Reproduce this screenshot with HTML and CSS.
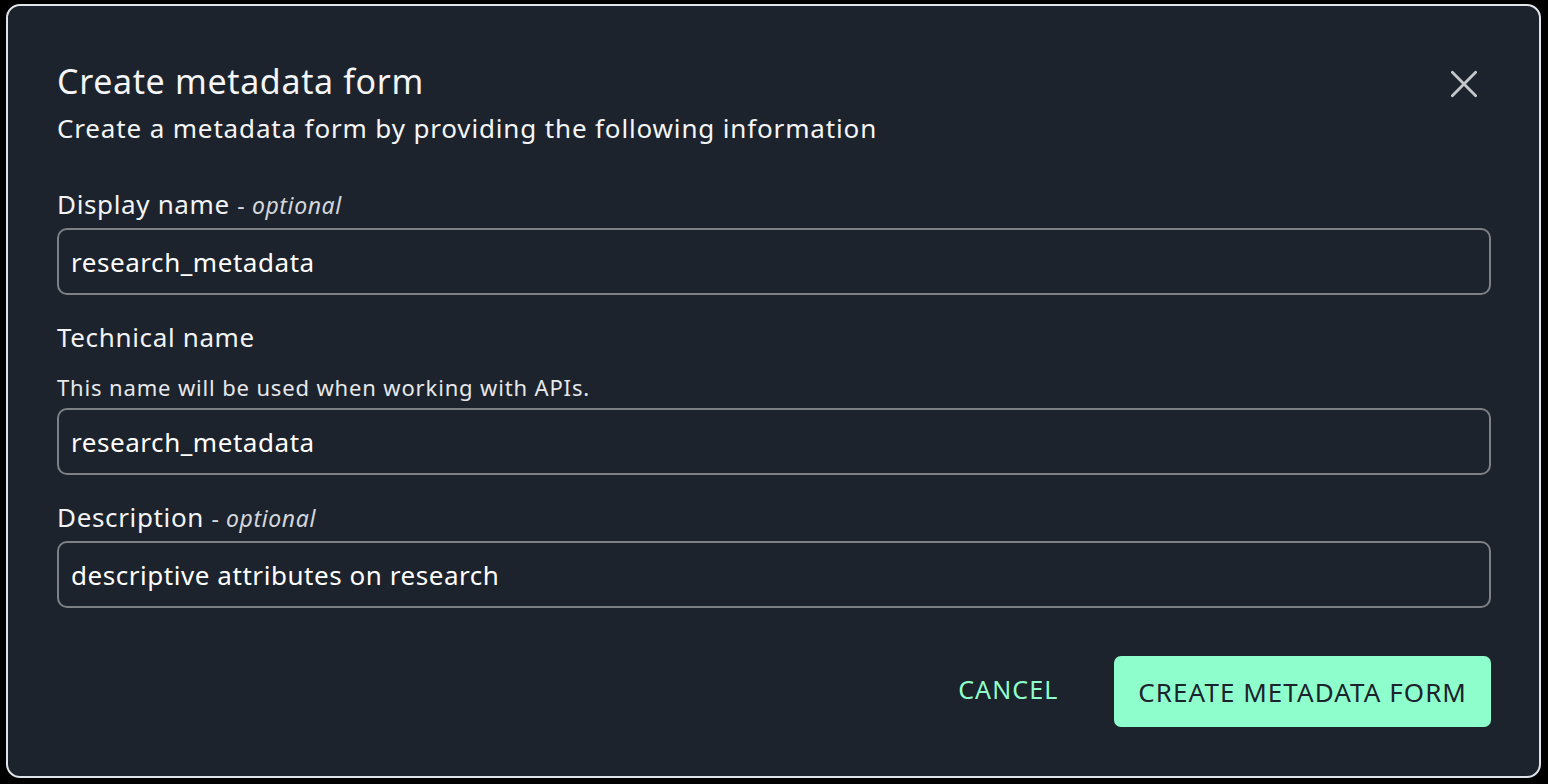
FILE: index.html
```html
<!DOCTYPE html>
<html lang="en">
<head>
<meta charset="utf-8">
<title>Create metadata form</title>
<link rel="stylesheet" href="styles.css">
</head>
<body>
<div class="dialog" role="dialog" aria-labelledby="dlg-title">
  <header class="dialog-header">
    <div class="heading">
      <h2 id="dlg-title" class="title">Create metadata form</h2>
      <p class="subtitle">Create a metadata form by providing the following information</p>
    </div>
    <button class="close" aria-label="Close">
      <svg viewBox="0 0 24 24" width="28" height="28" aria-hidden="true">
        <path d="M2 2 L22 22 M22 2 L2 22" stroke="currentColor" stroke-width="2.4" stroke-linecap="round" fill="none"/>
      </svg>
    </button>
  </header>

  <div class="fields">
    <div class="field field-1">
      <label class="label">Display name <span class="opt">- <em>optional</em></span></label>
      <div class="input">research_metadata</div>
    </div>
    <div class="field field-2">
      <label class="label">Technical name</label>
      <p class="hint">This name will be used when working with APIs.</p>
      <div class="input">research_metadata</div>
    </div>
    <div class="field field-3">
      <label class="label">Description <span class="opt">- <em>optional</em></span></label>
      <div class="input">descriptive attributes on research</div>
    </div>
  </div>

  <footer class="actions">
    <button class="btn-text">CANCEL</button>
    <button class="btn-primary">CREATE METADATA FORM</button>
  </footer>
</div>
</body>
</html>
```

FILE: styles.css
```css
* { box-sizing: border-box; }

html, body {
  margin: 0;
  padding: 0;
  background: #000;
  height: 784px;
  overflow: hidden;
}

body {
  font-family: "Noto Sans", "Open Sans", sans-serif;
  color: #f2f3f5;
  padding: 4px 7px 6px 6px;
}

.dialog {
  width: 1535px;
  height: 774px;
  background: #1d232c;
  border: 2px solid #dfe4ea;
  border-radius: 14px;
  padding: 53px 48px 49px 49px;
  display: flex;
  flex-direction: column;
}

.dialog-header {
  display: flex;
  justify-content: space-between;
  align-items: flex-start;
}

.title {
  margin: 0;
  font-size: 34px;
  font-weight: 400;
  line-height: 44px;
  letter-spacing: 0.65px;
  color: #f4f5f7;
}

.subtitle {
  margin: 9px 0 0;
  font-size: 26px;
  line-height: 32px;
  letter-spacing: 0.85px;
  color: #f4f5f7;
}

.close {
  background: none;
  border: 0;
  padding: 0;
  margin: 11px 13px 0 0;
  color: #c5c8cc;
  width: 28px;
  height: 28px;
  display: flex;
}

.fields {
  display: flex;
  flex-direction: column;
  margin-top: 43px;
}

.field {
  display: flex;
  flex-direction: column;
}

.field-2 { margin-top: 25px; }
.field-3 { margin-top: 25px; }

.label {
  font-size: 26px;
  line-height: 34px;
  letter-spacing: 0.65px;
  color: #f2f3f5;
  margin-bottom: 6px;
}

.opt {
  color: #d3d7dc;
  font-size: 23px;
  letter-spacing: 0.6px;
}

.opt em { font-style: italic; }

.hint {
  margin: 13px 0 7px;
  font-size: 22px;
  line-height: 28px;
  letter-spacing: 0.85px;
  color: #e6e8eb;
}

.input {
  height: 67px;
  border: 2px solid #7d8084;
  border-radius: 10px;
  padding: 0 12px;
  display: flex;
  align-items: center;
  font-size: 26px;
  letter-spacing: 0.55px;
  color: #ffffff;
}

.actions {
  margin-top: auto;
  display: flex;
  justify-content: flex-end;
  align-items: center;
  gap: 44px;
}

.btn-text {
  background: none;
  border: 0;
  font-family: inherit;
  font-size: 25px;
  letter-spacing: 1.1px;
  color: #8effcb;
  padding: 0 12px;
  height: 71px;
  margin-top: -6px;
}

.btn-primary {
  font-family: inherit;
  font-size: 26px;
  letter-spacing: 1.05px;
  background: #8effcc;
  color: #1d232c;
  border: 0;
  border-radius: 7px;
  height: 71px;
  padding: 0 24px;
}
```
